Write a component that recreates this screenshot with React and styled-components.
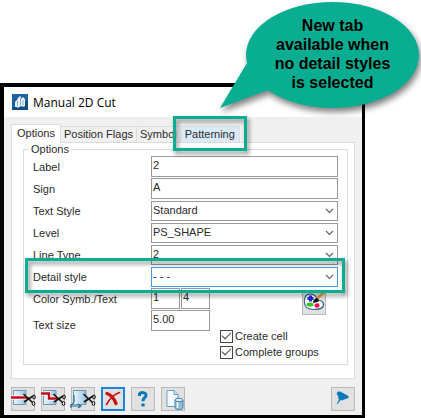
import { useState } from 'react'
import styled, { createGlobalStyle, css } from 'styled-components'

const colors = {
  accent: '#09ae92',
  face: '#f0f0f0',
  line: '#dcdcdc',
  field: '#999999',
  focus: '#4a98e0',
  text: '#2b2b2b',
}

const GlobalStyle = createGlobalStyle`
  * {
    box-sizing: border-box;
  }
  body {
    margin: 0;
    background: #fff;
    color: ${colors.text};
    font-family: 'Liberation Sans', Arial, sans-serif;
    font-size: 11px;
  }
  button, input, select {
    font: inherit;
    color: inherit;
  }
`

const Page = styled.div`
  position: relative;
  padding: 83px 56px 0 0;
`

const Dialog = styled.main`
  border: solid #000;
  border-width: 4px 3px 3px 4px;
  background: ${colors.face};
`

const TitleBar = styled.header`
  display: flex;
  align-items: center;
  gap: 5px;
  height: 30px;
  padding-left: 8px;
  background: #fff;
`

const Title = styled.h1`
  margin: 0;
  font-family: 'Open Sans', 'Noto Sans', sans-serif;
  font-size: 12px;
  font-weight: 400;
  color: #000;
`

const Body = styled.div`
  padding: 7px 7px 4px;
`

const Tabs = styled.div`
  display: flex;
  align-items: flex-end;
  height: 18px;
`

const Tab = styled.button`
  position: relative;
  height: 16px;
  padding: 0 3px;
  border: 1px solid ${colors.line};
  border-width: 1px 1px 0 0;
  background: ${colors.face};
  line-height: 15px;
  white-space: nowrap;

  ${({ $active }) => $active && css`
    height: 19px;
    margin-bottom: -1px;
    padding: 0 5px 2px;
    border-left-width: 1px;
    background: #fff;
    z-index: 1;
  `}
  ${({ $hot }) => $hot && css`
    padding: 0 4px;
    background: #d8e9f8;
  `}
`

const Highlight = styled.span`
  position: absolute;
  inset: ${({ $inset }) => $inset};
  border: 3px solid ${colors.accent};
  filter: drop-shadow(2px 3px 2px rgba(0, 0, 0, 0.45));
  pointer-events: none;
  z-index: 2;
`

const Panel = styled.section`
  padding: 0 6px 13px 11px;
  border: 1px solid ${colors.line};
  background: #fff;
`

const Group = styled.fieldset`
  min-width: 0;
  margin: 0;
  padding: 0 9px 4px;
  border: 1px solid ${colors.line};
`

const Legend = styled.legend`
  margin-left: -4px;
  padding: 0 2px;
  line-height: 13px;
`

const Row = styled.div`
  position: relative;
  display: grid;
  grid-template-columns: 118px 1fr;
  height: 22px;
`

const Label = styled.label`
  align-self: center;
  white-space: nowrap;
`

const Input = styled.input`
  width: 100%;
  min-width: 0;
  height: 21px;
  padding: 0 1px 4px;
  border: 1px solid ${colors.field};
  border-radius: 0;
  background: #fff;
  outline: none;
`

const SelectBox = styled.div`
  position: relative;
  align-self: center;
  height: 20px;

  svg {
    position: absolute;
    top: 7px;
    right: 4px;
    pointer-events: none;
  }
`

const Select = styled.select`
  display: block;
  appearance: none;
  width: 100%;
  height: 20px;
  padding: 0 16px 2px 1px;
  border: 1px solid ${({ $focused }) => ($focused ? colors.focus : colors.field)};
  border-radius: 0;
  background: #fff;
  outline: none;
`

const Lower = styled.div`
  display: flex;
  justify-content: space-between;
`

const LowerFields = styled.div`
  width: 177px;
`

const Pair = styled.div`
  display: flex;
  gap: 1px;
`

const SizeRow = styled(Row)`
  height: 30px;
`

const Side = styled.div`
  display: flex;
  flex-direction: column;
  width: 118px;
  padding-top: 3px;
`

const IconButton = styled.button`
  display: flex;
  align-items: center;
  justify-content: center;
  width: 24px;
  height: 24px;
  padding: 0;
  border: ${({ $focused }) => ($focused ? '2px solid #1e83dc' : '1px solid #b9b9b9')};
  background: #e1e1e1;

  svg {
    flex: none;
    overflow: visible;
  }
`

const PaletteButton = styled(IconButton)`
  align-self: flex-end;
  margin: 0 12px 13px 0;
`

const Check = styled.label`
  display: flex;
  align-items: center;
  gap: 2px;
  height: 16px;
  white-space: nowrap;
`

const CheckBox = styled.input`
  appearance: none;
  display: grid;
  place-items: center;
  width: 13px;
  height: 13px;
  margin: 0;
  border: 1px solid #444;
  background: #fff;

  &:checked::before {
    content: '';
    width: 8px;
    height: 4px;
    margin-top: -3px;
    border: solid #444;
    border-width: 0 0 1px 1px;
    transform: rotate(-45deg);
  }
`

const Toolbar = styled.footer`
  display: flex;
  gap: 6px;
  margin-top: 8px;

  button:last-child {
    margin-left: auto;
  }
`

const Callout = styled.aside`
  position: absolute;
  top: 2px;
  right: 2px;
  width: 200px;
  height: 107px;
  padding: 14px 0 0 27px;
  color: #000;
  font-size: 16px;
  font-weight: 700;
  line-height: 19px;
  text-align: center;
  z-index: 3;

  svg {
    position: absolute;
    top: 0;
    left: 0;
    overflow: visible;
    filter: drop-shadow(2px 4px 3px rgba(0, 0, 0, 0.5));
  }
  p {
    position: relative;
    margin: 0;
  }
`

const Chevron = () => (
  <svg width="9" height="6" viewBox="0 0 9 6" fill="none" stroke="#666" strokeWidth="1.2">
    <path d="M1 1l3.5 3.5L8 1" />
  </svg>
)

const AppIcon = () => (
  <svg width="16" height="16" viewBox="0 0 16 16">
    <rect width="16" height="16" fill="#124d84" />
    <path d="M0 0h16v7L0 14z" fill="#1b649f" />
    <path d="M3 13V8l2-2 1-2 2-2 1 1v2l2-2 2 2v7l-2 1-1-1-3 1-1 1-1-1z" fill="#e8f1f8" />
    <path d="M5.5 7v5M8.5 4v7.500M11 6v5" stroke="#5b92bd" strokeWidth=".7" />
  </svg>
)

const Scissors = () => (
  <g fill="none" stroke="#111">
    <path d="M11.5 6l9 8.5M12 14l9-6" strokeWidth="1.6" />
    <ellipse cx="22" cy="9" rx="1.300" ry="2" />
    <ellipse cx="21.5" cy="15.5" rx="1.300" ry="2" />
  </g>
)

const Plate = () => (
  <>
    <defs>
      <linearGradient id="plate" x1="0" x2="1">
        <stop offset="0" stopColor="#edf7ff" />
        <stop offset="1" stopColor="#9dc3df" />
      </linearGradient>
    </defs>
    <path d="M1.5 2.5h12.5v14H1.5z" fill="url(#plate)" stroke="#6597b8" />
  </>
)

const CutLineIcon = () => (
  <svg width="22" height="22" viewBox="0 0 22 22">
    <Plate />
    <path d="M-1 9.5h15l3 1" fill="none" stroke="#fff" strokeWidth="4" />
    <path d="M-1 9.5h15l3 1" fill="none" stroke="#c30d18" strokeWidth="2.4" />
    <Scissors />
  </svg>
)

const CutStepIcon = () => (
  <svg width="22" height="22" viewBox="0 0 22 22">
    <Plate />
    <path d="M-1 5.5h8v5h9" fill="none" stroke="#fff" strokeWidth="4" />
    <path d="M-1 5.5h8v5h9" fill="none" stroke="#c30d18" strokeWidth="2.4" />
    <Scissors />
  </svg>
)

const CutShapeIcon = () => (
  <svg width="22" height="22" viewBox="0 0 22 22">
    <Plate />
    <path d="M2 7v7l-3 4h9M-1 16v4M6 16l3 2-3 2" fill="none" stroke="#28739b" strokeWidth="1.2" />
    <Scissors />
  </svg>
)

const DeleteIcon = () => (
  <svg width="20" height="20" viewBox="0 0 20 20" fill="none" stroke="#ca1111" strokeLinecap="round">
    <path d="M4 4.5c3 1 7 5 9 10" strokeWidth="3.4" />
    <path d="M16.5 3.5C12 5 7 9 3.5 15.5" strokeWidth="1.6" />
  </svg>
)

const HelpIcon = () => (
  <svg width="22" height="22" viewBox="0 0 22 22">
    <path d="M7.5 8V6c1-2 6.5-2 6.5 1.200 0 2.800-3 2.300-3 6" fill="none" stroke="#0c7ab8" strokeWidth="3" />
    <rect x="9.3" y="15.5" width="3.4" height="3" rx="1" fill="#0c7ab8" />
  </svg>
)

const DataFileIcon = () => (
  <svg width="22" height="22" viewBox="0 0 22 22">
    <path d="M5 2.5h7l4 4v12H5z" fill="#f4faff" stroke="#6f9fbd" />
    <path d="M12 2.5v4h4" fill="#c6deee" stroke="#6f9fbd" />
    <path d="M13 12v8c1 2 8 2 8 0v-8z" fill="#8fbcd8" stroke="#4684aa" />
    <path d="M15.5 14v6" stroke="#fff" strokeWidth="1.5" />
    <ellipse cx="17" cy="12" rx="4" ry="1.8" fill="#d5eaf5" stroke="#4684aa" />
  </svg>
)

const PinIcon = () => (
  <svg width="22" height="22" viewBox="0 0 22 22" fill="#0c7ab8">
    <path d="M5 4.5C6 3 9 3 10 4.500L16.500 8v2l-4.500 1.500c-1.5 1-3 1.300-3.500.5L6 15.500l-1.500.8L7 11.500C6 10.500 6 9 6.500 8 5 7.500 4.500 6 5 4.500z" />
  </svg>
)

const PaletteIcon = () => (
  <svg width="22" height="22" viewBox="0 0 22 22">
    <path d="M7 2C2 2 1 7 1.500 11c.5 5 5 6.500 9 6.500 5 0 10-.5 10-5 0-3-3-4-5-4C14 8 14 2 7 2z" fill="#fff" stroke="#286684" strokeWidth="1.2" />
    <path d="M7.5 3.5v6M4.500 6.500h6" stroke="#2528e8" strokeWidth="3" />
    <ellipse cx="7" cy="12.5" rx="3.5" ry="2" fill="#35c51a" />
    <ellipse cx="14" cy="13.5" rx="2.6" ry="2.2" fill="#e7124c" />
    <path d="M14 7l7-7" stroke="#dca044" strokeWidth="2.6" />
    <path d="M10 11c0-3 2-5 4-5l2 2c0 2-3 2.500-6 3z" fill="#111" />
  </svg>
)

const tabs = ['Options', 'Position Flags', 'Symbol', 'Patterning']

const selects = [
  { id: 'textStyle', label: 'Text Style', value: 'Standard' },
  { id: 'level', label: 'Level', value: 'PS_SHAPE' },
  { id: 'lineType', label: 'Line Type', value: '2' },
  { id: 'detailStyle', label: 'Detail style', value: '- - -', marked: true },
]

const tools = [
  { name: 'Cut by line', icon: <CutLineIcon /> },
  { name: 'Cut by polyline', icon: <CutStepIcon /> },
  { name: 'Cut by shape', icon: <CutShapeIcon /> },
  { name: 'Delete', icon: <DeleteIcon />, focused: true },
  { name: 'Help', icon: <HelpIcon /> },
  { name: 'Templates', icon: <DataFileIcon /> },
  { name: 'Pin', icon: <PinIcon /> },
]

function App() {
  const [activeTab, setActiveTab] = useState('Options')

  return (
    <Page>
      <GlobalStyle />
      <Dialog>
        <TitleBar>
          <AppIcon />
          <Title>Manual 2D Cut</Title>
        </TitleBar>
        <Body>
          <Tabs role="tablist">
            {tabs.map((tab) => (
              <Tab
                key={tab}
                role="tab"
                aria-selected={tab === activeTab}
                $active={tab === activeTab}
                $hot={tab === 'Patterning'}
                onClick={() => setActiveTab(tab)}
              >
                {tab}
                {tab === 'Patterning' && <Highlight $inset="-11px -8px -9px -8px" />}
              </Tab>
            ))}
          </Tabs>
          <Panel>
            <Group>
              <Legend>Options</Legend>
              <Row>
                <Label htmlFor="label">Label</Label>
                <Input id="label" defaultValue="2" />
              </Row>
              <Row>
                <Label htmlFor="sign">Sign</Label>
                <Input id="sign" defaultValue="A" />
              </Row>
              {selects.map(({ id, label, value, marked }) => (
                <Row key={id}>
                  <Label htmlFor={id}>{label}</Label>
                  <SelectBox>
                    <Select id={id} defaultValue={value} $focused={marked}>
                      <option>{value}</option>
                    </Select>
                    <Chevron />
                  </SelectBox>
                  {marked && <Highlight $inset="-8px -7px -5px -8px" />}
                </Row>
              ))}
              <Lower>
                <LowerFields>
                  <Row>
                    <Label htmlFor="color">Color Symb./Text</Label>
                    <Pair>
                      <Input id="color" defaultValue="1" />
                      <Input aria-label="Text color" defaultValue="4" />
                    </Pair>
                  </Row>
                  <SizeRow>
                    <Label htmlFor="size">Text size</Label>
                    <Input id="size" defaultValue="5.00" />
                  </SizeRow>
                </LowerFields>
                <Side>
                  <PaletteButton aria-label="Colors">
                    <PaletteIcon />
                  </PaletteButton>
                  <Check>
                    <CheckBox type="checkbox" defaultChecked />
                    Create cell
                  </Check>
                  <Check>
                    <CheckBox type="checkbox" defaultChecked />
                    Complete groups
                  </Check>
                </Side>
              </Lower>
            </Group>
          </Panel>
          <Toolbar>
            {tools.map(({ name, icon, focused }) => (
              <IconButton key={name} aria-label={name} $focused={focused}>
                {icon}
              </IconButton>
            ))}
          </Toolbar>
        </Body>
      </Dialog>
      <Callout>
        <svg width="200" height="107" viewBox="0 0 200 107" fill={colors.accent}>
          <ellipse cx="113.5" cy="53" rx="86.5" ry="53" />
          <path d="M28 61L1 106l48-18z" />
        </svg>
        <p>
          New tab
          <br />
          available when
          <br />
          no detail styles
          <br />
          is selected
        </p>
      </Callout>
    </Page>
  )
}

export default App
